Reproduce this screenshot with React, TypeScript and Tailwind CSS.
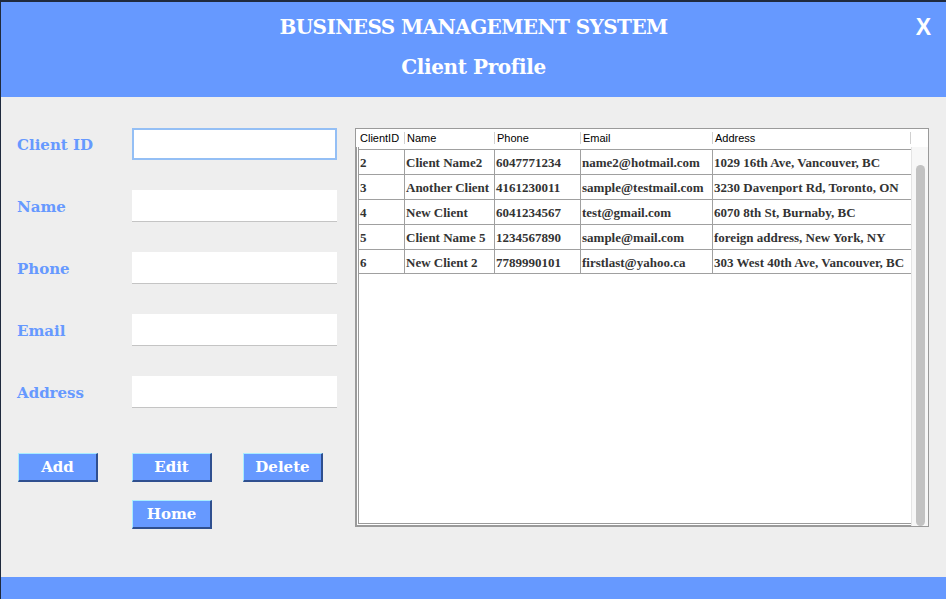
import type { ReactNode } from 'react';

const serif = "font-['DejaVu_Serif','Liberation_Serif',serif]";
const cellFont = "font-['Liberation_Serif','DejaVu_Serif',serif]";

const fields = ['Client ID', 'Name', 'Phone', 'Email', 'Address'];

const columns = [
  { label: 'ClientID', w: 'w-[47px]' },
  { label: 'Name', w: 'w-[90px]' },
  { label: 'Phone', w: 'w-[86px]' },
  { label: 'Email', w: 'w-[132px]' },
  { label: 'Address', w: 'w-[198px]' },
];

const rows = [
  ['2', 'Client Name2', '6047771234', 'name2@hotmail.com', '1029 16th Ave, Vancouver, BC'],
  ['3', 'Another Client', '4161230011', 'sample@testmail.com', '3230 Davenport Rd, Toronto, ON'],
  ['4', 'New Client', '6041234567', 'test@gmail.com', '6070 8th St, Burnaby, BC'],
  ['5', 'Client Name 5', '1234567890', 'sample@mail.com', 'foreign address, New York, NY'],
  ['6', 'New Client 2', '7789990101', 'firstlast@yahoo.ca', '303 West 40th Ave, Vancouver, BC'],
];

function SwingButton({ children, className = '' }: { children: ReactNode; className?: string }) {
  return (
    <button
      className={`w-[80px] h-[29px] bg-[#6699ff] border-t border-l border-t-[#a8ecff] border-l-[#a8ecff] border-r-2 border-b-2 border-r-[#2f4f8f] border-b-[#2f4f8f] text-white text-[15px] font-bold leading-none ${serif} ${className}`}
    >
      {children}
    </button>
  );
}

function FormRow({ label, focused }: { label: string; focused?: boolean }) {
  return (
    <div className="flex items-center h-[32px]">
      <div className={`w-[115px] pt-[3px] text-[15px] font-bold text-[#6699ff] ${serif}`}>{label}</div>
      <div
        className={`w-[205px] h-[32px] bg-white ${
          focused ? 'border-2 border-[#94bff5]' : 'border-b border-[#c4c4c4]'
        }`}
      />
    </div>
  );
}

function ClientTable() {
  return (
    <div className="w-[574px] h-[399px] border border-[#9a9a9a] bg-white flex flex-col">
      <div className="flex h-[18px] bg-white font-['Liberation_Sans',sans-serif] text-[11px] text-black">
        <div className="w-[1px]" />
        {columns.map((c, i) => (
          <div key={c.label} className={`${c.w} flex items-center`}>
            {i > 0 && <div className="w-px h-[12px] bg-[#d0d0d0] mr-[2px]" />}
            <span className={i === 0 ? 'pl-[3px]' : ''}>{c.label}</span>
          </div>
        ))}
        <div className="w-px h-[12px] bg-[#d0d0d0] self-center" />
      </div>
      <div className="flex flex-1 min-h-0">
        <div className="w-[555px] border-l-[3px] border-double border-b-[3px] border-[#9a9a9a] pt-[2px]">
          {rows.map((r) => (
            <div key={r[0]} className="flex h-[25px] border-t border-[#a0a0a0] last:border-b">
              {r.map((cell, i) => (
                <div
                  key={i}
                  className={`${i === 0 ? 'w-[46px]' : columns[i].w} ${
                    i < 4 ? 'border-r border-[#a0a0a0]' : ''
                  } flex items-center pl-[1px] pt-[2px] text-[13px] font-bold text-[#333] whitespace-nowrap overflow-hidden ${cellFont}`}
                >
                  {cell}
                </div>
              ))}
            </div>
          ))}
        </div>
        <div className="w-[17px] bg-[#f7f7f7] border-l border-[#e4e4e4] flex justify-center pt-[18px]">
          <div className="w-[9px] h-full rounded-full bg-[#c2c2c2]" />
        </div>
      </div>
    </div>
  );
}

export default function App() {
  return (
    <div className="w-[946px] h-[599px] flex flex-col bg-[#eeeeee] border-t-2 border-l border-[#1f2a3d] overflow-hidden">
      <header className={`h-[95px] bg-[#6699ff] relative flex flex-col items-center text-white font-bold ${serif}`}>
        <div className="text-[20px] leading-[24px] mt-[13px] tracking-[-0.6px]">BUSINESS MANAGEMENT SYSTEM</div>
        <div className="text-[20px] leading-[24px] mt-[16px] tracking-[-0.4px]">Client Profile</div>
        <span className="absolute right-[15px] top-[8px] text-[23px] font-['Liberation_Sans',sans-serif]">X</span>
      </header>

      <main className="flex-1 flex pl-[16px] pt-[31px]">
        <div className="w-[338px] flex flex-col">
          <div className="flex flex-col gap-[30px]">
            {fields.map((f, i) => (
              <FormRow key={f} label={f} focused={i === 0} />
            ))}
          </div>
          <div className="flex gap-[34px] mt-[45px] pl-[1px]">
            <SwingButton>Add</SwingButton>
            <SwingButton>Edit</SwingButton>
            <SwingButton className="-ml-[3px]">Delete</SwingButton>
          </div>
          <div className="mt-[18px] pl-[115px]">
            <SwingButton>Home</SwingButton>
          </div>
        </div>
        <div>
          <ClientTable />
        </div>
      </main>

      <footer className="h-[22px] bg-[#6699ff]" />
    </div>
  );
}
